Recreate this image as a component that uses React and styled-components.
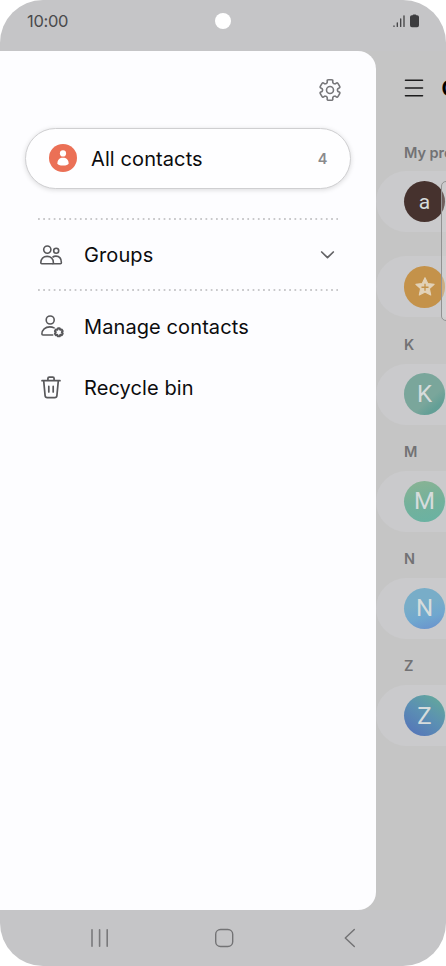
import styled, { createGlobalStyle } from "styled-components"

const GlobalStyle = createGlobalStyle`
  body {
    margin: 0;
    background: #fff;
    font-family: Inter, "Liberation Sans", sans-serif;
    overflow: hidden;
  }
  svg {
    display: block;
    flex: none;
  }
`

const Phone = styled.div`
  position: relative;
  display: flex;
  flex-direction: column;
  width: 446px;
  height: 966px;
  border-radius: 43px;
  overflow: hidden;
  background: #c5c5c7;
`

const StatusBar = styled.header`
  display: grid;
  grid-template-columns: 1fr auto 1fr;
  align-items: center;
  box-sizing: border-box;
  height: 51px;
  padding: 0 27px 9px 27px;
`

const Clock = styled.time`
  font-size: 16.5px;
  line-height: 20px;
  letter-spacing: -0.3px;
  color: #4a4a4c;
`

const Camera = styled.span`
  width: 16px;
  height: 16px;
  border-radius: 50%;
  background: #fff;
`

const StatusIcons = styled.div`
  display: flex;
  justify-content: flex-end;
  gap: 5px;
`

const Screen = styled.main`
  display: flex;
  height: 859px;
  background: #c5c5c5;
`

const Drawer = styled.aside`
  flex: none;
  box-sizing: border-box;
  width: 376.4px;
  padding: 27px 25.4px 0 25px;
  border-radius: 0 18px 18px 0;
  background: #fdfdff;
`

const DrawerHeader = styled.div`
  display: flex;
  justify-content: flex-end;
  height: 50px;
  padding-right: 9.5px;
`

const AllContacts = styled.div`
  display: flex;
  align-items: center;
  box-sizing: border-box;
  height: 60.5px;
  padding: 0 22.5px;
  gap: 14.5px;
  border: 1px solid #cfcfd1;
  border-radius: 31px;
  background: #fefeff;
  box-shadow: 0 1px 5px rgba(0, 0, 0, 0.14);
`

const ItemText = styled.span`
  flex: 1;
  padding-top: 1.5px;
  font-size: 20px;
  line-height: 28px;
  letter-spacing: 0.1px;
  color: #0c0c0e;
`

const Count = styled.span`
  font-size: 14.5px;
  font-weight: 600;
  color: #8a8a8c;
`

const MenuSection = styled.nav`
  margin: 0 13px;
  padding-top: ${props => props.$top || "0"};
`

const Dots = styled.div`
  height: 2px;
  background: radial-gradient(circle at 1px 1px, #c9c9cb 0.8px, transparent 1.2px) 0 0 / 5.24px 2px;
`

const MenuItem = styled.div`
  display: flex;
  align-items: center;
  height: ${props => props.$height || "61px"};
  gap: 20px;
  padding: 0 3px 0 1px;
`

const Contacts = styled.section`
  flex: 1;
  min-width: 0;
  overflow: hidden;
`

const TopBar = styled.div`
  display: flex;
  align-items: center;
  height: 74px;
  padding-left: 27.5px;
  gap: 17.5px;
`

const Title = styled.h1`
  margin: 0;
  font-size: 21px;
  font-weight: 700;
  color: #000;
`

const Label = styled.h2`
  box-sizing: border-box;
  height: 46.2px;
  margin: 0;
  padding: 9.5px 0 0 27.5px;
  font-size: 14.5px;
  font-weight: 600;
  line-height: 36px;
  white-space: nowrap;
  color: #727274;
`

const ContactRow = styled.div`
  display: flex;
  align-items: center;
  box-sizing: border-box;
  width: 120px;
  height: 61px;
  margin-bottom: ${props => props.$bottom || "0"};
  padding-left: 27.4px;
  border-radius: 31px;
  background: #cacacc;
`

const Avatar = styled.span`
  display: flex;
  align-items: center;
  justify-content: center;
  width: 41.5px;
  height: 41.5px;
  border-radius: 50%;
  font-family: Roboto, sans-serif;
  font-size: ${props => props.$size || "24px"};
  color: #d6dcdc;
  background: ${props => props.$fill};
`

// floating card that peeks in from the right edge
const EdgeCard = styled.div`
  position: absolute;
  top: 181px;
  left: 441px;
  box-sizing: border-box;
  width: 40px;
  height: 140px;
  border: 1px solid #929292;
  border-radius: 5px;
  background: linear-gradient(rgba(205, 205, 205, 0.25), rgba(218, 218, 218, 0.45));
`

const SystemNav = styled.footer`
  display: flex;
  align-items: center;
  justify-content: space-between;
  flex: 1;
  padding: 0 89px 0 90px;
`

const SignalIcon = () => (
  <svg width="12" height="14" viewBox="0 0 12 14" stroke="#414143" strokeWidth="1.3" strokeLinecap="round">
    <path d="M1 12v.4M4.3 8.8v3.6M7.7 5v7.4M11 1.8v10.6" />
  </svg>
)

const BatteryIcon = () => (
  <svg width="9" height="14" viewBox="0 0 9 14" fill="#3d3d3f">
    <path d="M2.7 1.2q0-.8.8-.8h2q.8 0 .8.8h.8Q9 1.2 9 3v8.3q0 1.9-1.9 1.9H1.9Q0 13.2 0 11.3V3q0-1.8 1.9-1.8z" />
  </svg>
)

// [angle, radius] of the corners of one gear tooth, in degrees from its middle
const tooth = [[-30, 7.3], [-19, 8.1], [-16, 10.6], [16, 10.6], [19, 8.1]]

const gearPoints = [0, 60, 120, 180, 240, 300].flatMap(turn =>
  tooth.map(([angle, radius]) => {
    const a = ((turn + angle) * Math.PI) / 180
    return [12 + radius * Math.sin(a), 12 - radius * Math.cos(a)]
  })
)

// rounds every corner with a curve that starts and ends on its two sides
const roundedPath = points => {
  const along = (p, q, t) => [p[0] + (q[0] - p[0]) * t, p[1] + (q[1] - p[1]) * t].map(n => n.toFixed(2)).join(" ")
  const parts = points.map((p, i) => {
    const before = points[(i + points.length - 1) % points.length]
    const after = points[(i + 1) % points.length]
    return `${i ? "L" : "M"}${along(p, before, 0.3)}Q${p[0].toFixed(2)} ${p[1].toFixed(2)} ${along(p, after, 0.3)}`
  })
  return parts.join("") + "z"
}

const gearPath = roundedPath(gearPoints)

const GearIcon = () => (
  <svg width="24" height="24" viewBox="0 0 24 24" fill="none" stroke="#77777a" strokeWidth="1.6" strokeLinejoin="round">
    <path d={gearPath} />
    <circle cx="12" cy="12" r="3.5" />
  </svg>
)

const PersonBadge = () => (
  <svg width="28" height="28" viewBox="0 0 28 28">
    <circle cx="14" cy="14" r="14" fill="#eb7056" />
    <circle cx="14" cy="9.4" r="3.1" fill="#fff" />
    <path d="M8.4 19.3c0-3.7 2.3-5.6 5.6-5.6s5.6 1.9 5.6 5.6c0 1.5-2.5 2.3-5.6 2.3s-5.6-.8-5.6-2.3z" fill="#fff" />
  </svg>
)

const GroupsIcon = () => (
  <svg width="25" height="24" viewBox="0 0 25 24" fill="none" stroke="#58585b" strokeWidth="1.6" strokeLinejoin="round">
    <circle cx="8.3" cy="6.6" r="3.6" />
    <circle cx="17.2" cy="7.8" r="2.5" />
    <path d="M2.8 20.8q-1 0-1-1c0-4 2.6-6.4 6.3-6.4s6.3 2.4 6.3 6.4q0 1-1 1z" />
    <path d="M13.5 14.3c1-.9 2.2-1.2 3.4-1.2 3.4 0 5.5 2.6 5.5 6.7q0 1-1 1h-8" />
  </svg>
)

const ManageIcon = () => (
  <svg width="25" height="24" viewBox="0 0 25 24" fill="none" stroke="#58585b" strokeWidth="1.6" strokeLinecap="round" strokeLinejoin="round">
    <circle cx="11.2" cy="6" r="4" />
    <path d="M13.7 21H4q-1.100 0-1.100-1c0-4.300 3.400-7.100 7.900-7.100 1.700 0 3 .3 4.300 1" />
    <g transform="translate(15 13.500) scale(.4)">
      <path d={gearPath} strokeWidth="4.800" strokeLinejoin="miter" />
    </g>
  </svg>
)

const TrashIcon = () => (
  <svg width="25" height="26" viewBox="0 0 25 26" fill="none" stroke="#58585b" strokeWidth="1.7" strokeLinecap="round" strokeLinejoin="round">
    <path d="M3 6.700h18M8.900 6.500V4.400q0-1.300 1.300-1.300h3.600q1.300 0 1.300 1.300v2.100" />
    <path d="M4.700 6.900l1.400 14.700q.2 2 2.100 2h7.600q1.900 0 2.100-2l1.400-14.700M9.800 12.400V18M14.200 12.400V18" />
  </svg>
)

const ChevronIcon = () => (
  <svg width="15" height="10" viewBox="0 0 15 10" fill="none" stroke="#636366" strokeWidth="1.7" strokeLinecap="round" strokeLinejoin="round">
    <path d="M1.700 2l5.800 5.600L13.300 2" />
  </svg>
)

const MenuIcon = () => (
  <svg width="20" height="20" viewBox="0 0 20 20" stroke="#1c1c1d" strokeWidth="1.6" strokeLinecap="round">
    <path d="M1.500 2.300h17M1.500 10h17M1.500 17.700h17" />
  </svg>
)

const StarIcon = () => (
  <svg width="22" height="22" viewBox="0 0 20 20">
    <path d="M10 1.500l2.500 5.300 5.800.7-4.300 4 1.200 5.800L10 14.500l-5.200 2.800L6 11.500l-4.300-4 5.800-.7z" fill="#e2d2b8" stroke="#e2d2b8" strokeLinejoin="round" />
    <path d="M10 7v6.400M6.800 10.200h6.400" stroke="#c4924a" strokeWidth="1.2" />
  </svg>
)

const RecentsIcon = () => (
  <svg width="20" height="20" viewBox="0 0 20 20" stroke="#79797b" strokeWidth="1.6" strokeLinecap="round">
    <path d="M2 1.700v16.600M9.600 1.700v16.600M17.200 1.700v16.600" />
  </svg>
)

const HomeIcon = () => (
  <svg width="20" height="20" viewBox="0 0 20 20" fill="none" stroke="#737375" strokeWidth="1.4">
    <rect x="1.700" y="1.500" width="17" height="17" rx="4.800" />
  </svg>
)

const BackIcon = () => (
  <svg width="20" height="20" viewBox="0 0 20 20" fill="none" stroke="#737375" strokeWidth="1.5" strokeLinecap="round" strokeLinejoin="round">
    <path d="M17.300 1.500L8.300 10l9 8.500" />
  </svg>
)

const people = [
  { letter: "K", fill: "linear-gradient(140deg, #7aa69b 0 62%, #639f96 80%)" },
  { letter: "M", fill: "linear-gradient(170deg, #88b394 5%, #74b19b 50%, #69b2a3)" },
  { letter: "N", fill: "linear-gradient(165deg, #78adc8 40%, #6fa7cf 68%, #698fcd)" },
  { letter: "Z", fill: "linear-gradient(35deg, #5679b8 15%, #5b8fb3 50%, #62a49f 85%)" },
]

function App() {
  return (
    <>
      <GlobalStyle />
      <Phone>
        <StatusBar>
          <Clock>10:00</Clock>
          <Camera />
          <StatusIcons>
            <SignalIcon />
            <BatteryIcon />
          </StatusIcons>
        </StatusBar>
        <Screen>
          <Drawer>
            <DrawerHeader>
              <GearIcon />
            </DrawerHeader>
            <AllContacts>
              <PersonBadge />
              <ItemText>All contacts</ItemText>
              <Count>4</Count>
            </AllContacts>
            <MenuSection $top="29.5px">
              <Dots />
              <MenuItem $height="69px">
                <GroupsIcon />
                <ItemText>Groups</ItemText>
                <ChevronIcon />
              </MenuItem>
              <Dots />
            </MenuSection>
            <MenuSection $top="4.5px">
              <MenuItem>
                <ManageIcon />
                <ItemText>Manage contacts</ItemText>
              </MenuItem>
              <MenuItem>
                <TrashIcon />
                <ItemText>Recycle bin</ItemText>
              </MenuItem>
            </MenuSection>
          </Drawer>
          <Contacts>
            <TopBar>
              <MenuIcon />
              <Title>Contacts</Title>
            </TopBar>
            <Label>My profile</Label>
            <ContactRow $bottom="24.2px">
              <Avatar $fill="#46322e" $size="21px">a</Avatar>
            </ContactRow>
            <ContactRow>
              <Avatar $fill="#c4924a">
                <StarIcon />
              </Avatar>
            </ContactRow>
            {people.map(({ letter, fill }) => (
              <div key={letter}>
                <Label>{letter}</Label>
                <ContactRow>
                  <Avatar $fill={fill}>{letter}</Avatar>
                </ContactRow>
              </div>
            ))}
          </Contacts>
        </Screen>
        <SystemNav>
          <RecentsIcon />
          <HomeIcon />
          <BackIcon />
        </SystemNav>
        <EdgeCard />
      </Phone>
    </>
  )
}

export default App
